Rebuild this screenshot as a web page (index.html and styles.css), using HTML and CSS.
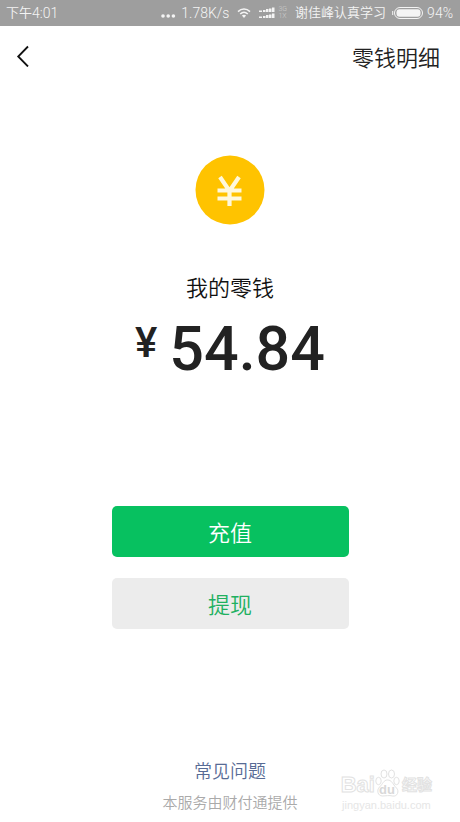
FILE: index.html
```html
<!DOCTYPE html>
<html lang="zh-CN">
<head>
  <meta charset="UTF-8" />
  <meta name="viewport" content="width=device-width, initial-scale=1" />
  <title>我的零钱</title>
  <link rel="stylesheet" href="styles.css">
</head>
<body>
  <div class="status-bar">
    <span class="period">下午</span>
    <span class="time">4:01</span>
    <svg class="dots" width="16" height="14" viewBox="0 0 16 14" fill="currentColor">
      <circle cx="2" cy="10" r="1.8" />
      <circle cx="7.200" cy="10" r="1.8" />
      <circle cx="12.400" cy="10" r="1.8" />
    </svg>
    <span class="speed">1.78K/s</span>
    <svg class="wifi" width="14" height="12" viewBox="0 0 14 12" fill="none" stroke="currentColor" stroke-width="1.5">
      <path d="M1 4.6C4.5 1.2 9.5 1.2 13 4.6" />
      <path d="M3.2 7C5.5 4.8 8.5 4.8 10.8 7" />
      <path d="M4.9 8.6Q7 7 9.1 8.6L7 11Z" fill="currentColor" stroke="none" />
    </svg>
    <svg class="signal" width="17" height="12" viewBox="0 0 17 12" fill="currentColor">
      <path d="M0 3.500h3V5H0zM4 3h2.500v2H4zM7 2h2.500v3H7zM10 1.500h2.500V5H10zM13 .5h2.500V5H13z" />
      <path d="M0 9.500h3V11H0zM4 9h2.500v2H4zM7 8h2.500v3H7zM10 7.500h2.500V11H10zM13 6.500h2.500V11H13z" />
    </svg>
    <span class="network"><span>3G</span><span>1X</span></span>
    <span class="carrier">谢佳峰认真学习</span>
    <svg class="battery" width="31" height="12" viewBox="0 0 31 12" fill="none">
      <rect x="2.5" y=".5" width="28" height="11" rx="5.5" stroke="currentColor" />
      <rect x="4.5" y="2.3" width="24" height="7.4" rx="3" fill="currentColor" />
      <path d="M.7 4v4" stroke="currentColor" />
    </svg>
    <span>94%</span>
  </div>

  <header class="nav">
    <button class="back" type="button" aria-label="返回">
      <svg width="14" height="22" viewBox="0 0 14 22" fill="none" stroke="currentColor" stroke-width="1.8">
        <path d="M12 1.500L2.200 11.500l9.800 10" />
      </svg>
    </button>
    <a class="detail" href="#">零钱明细</a>
  </header>

  <main class="wallet">
    <svg class="coin" width="70" height="70" viewBox="0 0 70 70">
      <circle cx="35" cy="35" r="34.5" fill="#ffc300" />
      <path d="M25 22l9.500 14 9.500-14M34.500 35v16M22.500 35.500h24M22.500 43.500h24" fill="none" stroke="#fff8dc" stroke-width="4.200" />
    </svg>
    <h1 class="label">我的零钱</h1>
    <div class="amount">
      <span class="currency">¥</span>
      <span class="value">54.84</span>
    </div>
    <div class="actions">
      <button class="btn btn-primary" type="button">充值</button>
      <button class="btn" type="button">提现</button>
    </div>
  </main>

  <footer class="footer">
    <a class="faq" href="#">常见问题</a>
    <p class="provider">本服务由财付通提供</p>
    <div class="watermark">
      <div class="mark-brand">
        <span>Bai</span>
        <svg width="25" height="29" viewBox="0 0 25 29" fill="#fff" stroke="#e2e2e2">
          <ellipse cx="3.500" cy="12" rx="2.700" ry="3.700" />
          <ellipse cx="9" cy="5" rx="3" ry="4" />
          <ellipse cx="16.500" cy="5" rx="3" ry="4" />
          <ellipse cx="21.500" cy="12" rx="2.700" ry="3.700" />
          <path d="M12.500 11c-4 0-4.500 4-8 7-3 3-2 9 3 9 3 0 7-1 10 0 5 1 7-5 4-8-4-4-4.500-8-9-8z" />
          <text class="mark-du" x="12" y="25" text-anchor="middle">du</text>
        </svg>
        <span class="mark-cn">经验</span>
      </div>
      <div class="mark-url">jingyan.baidu.com</div>
    </div>
  </footer>
</body>
</html>
```

FILE: styles.css
```css
:root {
  --green: #07c160;
  --text-color: #222222;
  --link-color: #576b95;
}

* {
  box-sizing: border-box;
}

body {
  margin: 0;
  min-height: 100vh;
  display: flex;
  flex-direction: column;
  font-family: "Noto Sans CJK SC", sans-serif;
  font-weight: 350;
  background-color: #ffffff;
  color: var(--text-color);
}

a {
  text-decoration: none;
}

button {
  font-family: inherit;
  font-weight: inherit;
  border: none;
  cursor: pointer;
}

/* Status bar */
.status-bar {
  display: flex;
  align-items: center;
  height: 26px;
  padding: 0 7px 0 6px;
  font-family: Roboto, "Noto Sans CJK SC", sans-serif;
  font-size: 14px;
  line-height: 18px;
  white-space: nowrap;
  background-color: #9e9e9e;
  color: #f4f4f4;
}

.period,
.carrier {
  font-size: 13px;
}

.time {
  margin-right: auto;
}

.speed {
  margin: 0 8px 0 4px;
}

.signal {
  margin: 0 2px 0 8px;
}

.network {
  display: flex;
  flex-direction: column;
  font-size: 7px;
  line-height: 7px;
  color: #cccccc;
}

.carrier {
  margin: 0 6px 0 8px;
}

.battery {
  margin-right: 4px;
}

/* Title bar */
.nav {
  display: flex;
  justify-content: space-between;
  align-items: center;
  height: 60px;
  padding: 0 20px 0 16px;
}

.back {
  display: flex;
  padding: 0;
  background: none;
  color: #111111;
}

.detail {
  font-size: 22px;
  line-height: 32px;
  color: var(--text-color);
}

/* Balance */
.wallet {
  display: flex;
  flex-direction: column;
  align-items: center;
  padding-top: 69px;
}

.label {
  margin: 45px 0 0;
  font-size: 22px;
  font-weight: inherit;
  line-height: 32px;
  color: #111111;
}

.amount {
  display: flex;
  align-items: flex-start;
  gap: 12px;
  margin-top: 15px;
  font-family: Roboto, "Noto Sans CJK SC", sans-serif;
  font-weight: 500;
}

.currency {
  font-size: 42px;
  line-height: 52px;
}

.value {
  font-size: 61px;
  line-height: 64px;
}

.actions {
  display: flex;
  flex-direction: column;
  gap: 21px;
  width: 237px;
  margin-top: 125px;
}

.btn {
  padding: 9px 0 10px;
  border-radius: 5px;
  font-size: 22px;
  line-height: 32px;
  background-color: #ececec;
  color: #20b060;
}

.btn-primary {
  background-color: var(--green);
  color: #ffffff;
}

/* Footer */
.footer {
  position: relative;
  margin-top: auto;
  padding-bottom: 9px;
  text-align: center;
}

.faq {
  font-size: 18px;
  line-height: 26px;
  color: var(--link-color);
}

.provider {
  margin: 8px 0 0;
  font-size: 15px;
  line-height: 22px;
  color: #aaaaaa;
}

.watermark {
  position: absolute;
  right: 28px;
  bottom: 10px;
  font-family: "Liberation Sans", "Noto Sans CJK SC", sans-serif;
  color: #ffffff;
}

.mark-brand {
  display: flex;
  align-items: flex-end;
  justify-content: center;
  font-size: 22px;
  font-weight: 700;
  line-height: 26px;
  -webkit-text-stroke: 1px #e2e2e2;
}

.mark-cn {
  margin-left: 2px;
  font-size: 15px;
}

.mark-du {
  font-size: 13px;
  stroke: none;
  fill: #d8d8d8;
  -webkit-text-stroke: 0;
}

.mark-url {
  font-size: 11px;
  line-height: 14px;
  color: #e6e6e6;
}
```
